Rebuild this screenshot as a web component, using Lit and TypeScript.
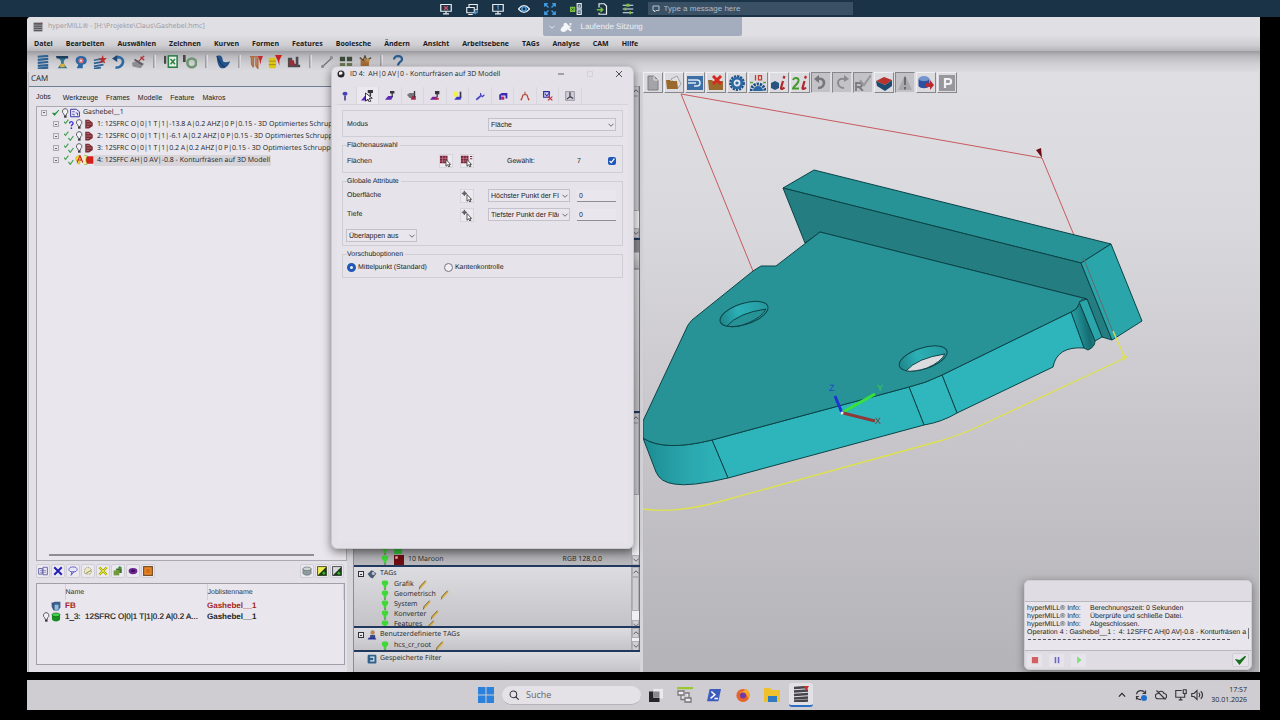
import { LitElement, html, svg, css } from "lit";
import { customElement } from "lit/decorators.js";
import { classMap } from "lit/directives/class-map.js";

/* All glyphs are drawn on a 16 x 16 grid. */
const glyphs: Record<string, unknown> = {
  screenX: svg`<path d="M1 2h14v9H1z M8 11v3 M4 14.5h8" fill="none" stroke="#e8edf2" stroke-width="1.6"/><path d="M5.5 4.2l5 5m0-5l-5 5" stroke="#e0566a" stroke-width="1.7"/>`,
  screens: svg`<path d="M4 6V2h11v7h-3 M1 6h10v7H1z M3 15.5h6" fill="none" stroke="#e8edf2" stroke-width="1.5"/><path d="M15 10v3h-4m2-2l-2 2 2 2" fill="none" stroke="#4ba3e8" stroke-width="1.4"/>`,
  screenOne: svg`<path d="M1 2h14v9H1z M8 11v3 M4 14.5h8" fill="none" stroke="#e8edf2" stroke-width="1.6"/><path d="M6.8 4.8L8.2 4v5" fill="none" stroke="#4ba3e8" stroke-width="1.5"/>`,
  eye: svg`<path d="M0.5 8Q8-1 15.5 8Q8 17 .5 8z" fill="none" stroke="#e8edf2" stroke-width="1.7"/><circle cx="8" cy="8" r="2.8" fill="#1b3347" stroke="#4ba3e8" stroke-width="1.9"/>`,
  expand: svg`<path d="M1 5V1h4M1 1l5 5M11 1h4v4M15 1l-5 5M1 11v4h4M1 15l5-5M15 11v4h-4M15 15l-5-5" fill="none" stroke="#3f9fe6" stroke-width="1.7"/>`,
  grid: svg`<rect x="0" y="5" width="7" height="7" fill="#7ac142"/><path d="M2 7l3 3m0-3l-3 3" stroke="#1b3347"/><path d="M9.5.8H15v6H9.5z M9.5 9.2H15v6H9.5z" fill="none" stroke="#e8edf2" stroke-width="1.5"/><path d="M12.2 2.5v3M11 12.2h3" stroke="#e8edf2" stroke-width="1.5"/>`,
  file: svg`<path d="M4 6V1h7l3 3v11H4v-2" fill="none" stroke="#e8edf2" stroke-width="1.6"/><path d="M1 9h8m-3-3l3.2 3L6 12" fill="none" stroke="#7ac142" stroke-width="1.7"/>`,
  sliders: svg`<path d="M1 3h14M1 8h14M1 13h14" stroke="#e8edf2" stroke-width="1.5"/><path d="M9 1v4M4.5 6v4M11 11v4M7 1v4" stroke="#7ac142" stroke-width="2.2"/>`,
  chat: svg`<path d="M2 2h12v9H8l-3 3v-3H2z" fill="none" stroke="#d5dde5" stroke-width="1.6"/>`,
  chevron: svg`<path d="M3 5.5l5 5 5-5" fill="none" stroke="currentColor" stroke-width="1.7"/>`,
  chevronUp: svg`<path d="M3 10.5l5-5 5 5" fill="none" stroke="currentColor" stroke-width="1.9"/>`,
  splash: svg`<path d="M1 13c-1-4 3-5 4-7-1-3 2-5 4-3s2 4 4 3l2 2-3 1 4 3-2 2-4-3c-2 4-6 5-9 2z" fill="#f5f6f9"/><circle cx="14" cy="4" r="1.5" fill="#f5f6f9"/>`,
  app: svg`<rect x="1" y="1" width="14" height="14" fill="#5b5a60"/><path d="M1 5h14M1 8.5h14M1 12h14" stroke="#a9a8ae" stroke-width="1.2"/><path d="M12 1h3v3z" fill="#c43a3a"/>`,
  bars: svg`<path d="M2 2l12-1M2 5.5l12-1M2 9l12-1M2 12.5l12-1M2 15.5l12-1" stroke="#2d6293" stroke-width="2.5"/>`,
  spool: svg`<path d="M2 1h12l-4 6v3l4 5H3l4-5V7z" fill="#2f7390"/><path d="M1 1h14v3H2z" fill="#1c3d5c"/><path d="M6 10h5v4H6z" fill="#d7b040"/>`,
  head: svg`<path d="M3 15l2-4C0 8 1 1 8 1s8 6 5 9l-3 1v4z" fill="#2a67a5"/><circle cx="8" cy="6.5" r="3" fill="#d96f72"/><circle cx="8" cy="6.5" r="1.3" fill="#dcdbe1"/>`,
  barsStar: svg`<path d="M1 6l11-2M1 9.5l11-2M1 13l11-2M1 15.5l8-1" stroke="#2d6293" stroke-width="1.9"/><path d="M11 0l1.3 3.4 3.7.2-3 2.4 1 3.8L11 7.6 7.8 9.4 9 6 6 3.7l3.7-.1z" fill="#b5302f"/>`,
  undoBlue: svg`<path d="M4 3c6-2 10 2 8 7-1 3-5 5-8 4" fill="none" stroke="#2c6aa3" stroke-width="3"/><path d="M6 0v8L0 4z" fill="#1d4878"/>`,
  cutter: svg`<path d="M1 9l6-3 8 4-4 5-9-2z" fill="#8d8c92"/><path d="M4 5l9 6" stroke="#55545a" stroke-width="2"/><path d="M9 7l6-6M11 2l4 4" stroke="#b33237" stroke-width="1.6"/>`,
  excel: svg`<path d="M1 1v9" stroke="#454a44" stroke-width="3"/><rect x="5" y="1" width="10" height="13" fill="#e8f2e9" stroke="#2b7f46" stroke-width="1.8"/><path d="M7.5 4.5l5 6m0-6l-5 6" stroke="#2b7f46" stroke-width="1.7"/>`,
  ring: svg`<path d="M1.5 0v8" stroke="#454a44" stroke-width="3"/><circle cx="10" cy="9" r="5" fill="none" stroke="#6e9672" stroke-width="3"/>`,
  boot: svg`<path d="M1 1c5-1 6 0 7 6 2 2 5 1 8 0-1 4-5 9-10 8C2 13 1 6 1 1z" fill="#235489"/><path d="M1 1c2 6 4 10 9 13" fill="none" stroke="#153b66" stroke-width="1.5"/>`,
  tools: svg`<path d="M1 2h9M3 2v8l2 4V2M8 3v9l2 3V3" fill="none" stroke="#b06e45" stroke-width="1.8"/><path d="M10 1h6l-2 5-1 5-1-5z" fill="#c42a2e"/>`,
  toolsY: svg`<rect x="1" y="3" width="8" height="12" rx="1" fill="#dfc514"/><path d="M1 7h8M1 11h8" stroke="#9f8b0f"/><path d="M8 0h8l-3 6v6l-2-6z" fill="#c8201f"/>`,
  machine: svg`<path d="M1 3h5v7h4V2h3v9h2v3H1z" fill="#4b4a50"/><path d="M2 6h6l1 6H3z" fill="#9e2c35"/>`,
  line: svg`<path d="M2 14L14 3" stroke="#6d6c72" stroke-width="1.5"/><circle cx="3" cy="13" r="1.8" fill="#8d8c92"/><circle cx="13" cy="3" r="1.8" fill="#8d8c92"/>`,
  blocks: svg`<path d="M1 2h6v5H1zM9 2h6v5H9z" fill="#3d4b3a"/><path d="M1 9h6v5H1zM9 9h6v5H9z" fill="#6d7d52"/>`,
  jar: svg`<path d="M3 5h10l-1 10H3z" fill="#a8713a"/><path d="M2 3l4 3 2-5 2 5 5-3" stroke="#5d4a33" stroke-width="1.5" fill="none"/><circle cx="11" cy="6" r="2" fill="#c48b42"/>`,
  help: svg`<path d="M3.5 5C3.5 0 13 0 12.5 5c0 3-4.5 3-4.5 7" fill="none" stroke="#2a5d92" stroke-width="2.6"/><circle cx="8" cy="14.5" r="1.5" fill="#2a5d92"/>`,
  check: svg`<path d="M1 8l4 5L14 2l-8 7z" fill="#1e8a35" stroke="#1e8a35" stroke-width="1.5"/>`,
  checks: svg`<path d="M0 4l2.5 3L7 1M7 11l3 4 5-7" fill="none" stroke="#3da14f" stroke-width="1.8"/>`,
  checkQ: svg`<path d="M0 4l2.5 3L7 1" fill="none" stroke="#3da14f" stroke-width="1.8"/><path d="M9 7c0-4 5.5-3.5 5.5 0 0 2-2.7 2-2.7 4.5" fill="none" stroke="#3a38d0" stroke-width="2.2"/><circle cx="11.8" cy="14.6" r="1.4" fill="#3a38d0"/>`,
  bulb: svg`<path d="M8 1a4.5 4.5 0 0 1 2.5 8.3L10 12H7L6 9.3A4.5 4.5 0 0 1 8 1z" fill="#f2f1f5" stroke="#55545a" stroke-width="1.5"/><path d="M6.5 12.5h4v3h-4z" fill="#3b3a40"/>`,
  bulbA: svg`<path d="M7 1a5 5 0 0 1 2.5 9L9 14H6L5 10A5 5 0 0 1 7 1z" fill="#f4e23a" stroke="#b59d17"/><path d="M5 12L9.5 1 14 12M7 8h5" fill="none" stroke="#d3251e" stroke-width="1.9"/>`,
  doc: svg`<path d="M1 2h9l5 4v8H1z" fill="#eceafa" stroke="#3a37a0" stroke-width="1.6"/><path d="M3.5 6h4M3.5 10h3v2M9 8h3v4" stroke="#3a37a0" stroke-width="1.3" fill="none"/>`,
  job: svg`<path d="M2 1h6l6 5v5l-6 4H2z" fill="#7c2d33"/><path d="M4 4h5M4 8h8M4 12h4" stroke="#c79a9e" stroke-width=".9"/>`,
  jobRed: svg`<rect x="3" y="2" width="12" height="12" fill="#d3201c"/><path d="M0 1h5c0 2-2 3-2 7s2 5 2 7H0" fill="#f6f2a8" stroke="#6fae36"/>`,
  listB: svg`<path d="M1 4h6v9H1zM8 2h7v12H8z" fill="#ecebf5" stroke="#6764a8" stroke-width="1.5"/><path d="M3 7h10M3 10h10" stroke="#6764a8"/>`,
  crossB: svg`<path d="M2 2l12 12M14 2L2 14" stroke="#231fb4" stroke-width="3.2"/>`,
  lasso: svg`<ellipse cx="8" cy="5.5" rx="6.5" ry="4" fill="#e7e6f7" stroke="#6a66c9" stroke-width="1.6"/><path d="M6 9l-1 6 5-7" fill="none" stroke="#6a66c9" stroke-width="1.6"/>`,
  sun: svg`<path d="M3 5l3-3 5 1 3 4-2 6H5l-3-2z" fill="#eeeac0" stroke="#7e7d60" stroke-dasharray="2 1"/><path d="M4 12l9-5" stroke="#8d8c5a" stroke-width="1.5"/>`,
  crossY: svg`<path d="M2 2l12 12M14 2L2 14" stroke="#a9aa00" stroke-width="3.6"/><path d="M2 2l12 12M14 2L2 14" stroke="#f3ee3a" stroke-width="1.4"/>`,
  cube: svg`<path d="M1 7h9v8H1z" fill="#6f9a3c"/><path d="M5 4h9v7h-4V7H5z" fill="#486f2a"/><path d="M11 0v6M8 3h6" stroke="#2f8e2c" stroke-width="2"/>`,
  torus: svg`<ellipse cx="8" cy="8" rx="7" ry="5" fill="#6b2390"/><ellipse cx="8" cy="7.5" rx="3" ry="1.6" fill="#2c0d40"/>`,
  orange: svg`<rect x="1" y="1" width="14" height="14" fill="#e98325" stroke="#6f4a28" stroke-width="1.8"/><path d="M5 5h6v6H5z" fill="#d06c13"/>`,
  drum: svg`<path d="M1.5 4v8c2 3.5 11 3.5 13 0V4" fill="#8f9c9e" stroke="#5a6668"/><ellipse cx="8" cy="4.5" rx="6.5" ry="3" fill="#cdd5d6" stroke="#5a6668"/>`,
  diagY: svg`<rect x="1" y="1" width="14" height="14" fill="#f1ee52" stroke="#3d3d20" stroke-width="1.4"/><path d="M15 1v14H1z" fill="#1c3b1a"/><path d="M11 9v5M8.5 11.5h5" stroke="#3bd23b" stroke-width="1.6"/>`,
  diagG: svg`<rect x="1" y="1" width="14" height="14" fill="#d9d9dd" stroke="#3d3d40" stroke-width="1.4"/><path d="M15 1v14H1z" fill="#1c3b1a"/><path d="M11 9v5M8.5 11.5h5" stroke="#3bd23b" stroke-width="1.6"/>`,
  cubeBlue: svg`<path d="M1 3l5-2h9v9l-3 5H4L1 9z" fill="#3f5f8e"/><path d="M5 6h7v8H5z" fill="#8fc0dd"/><path d="M1 3l4 3v8" fill="none" stroke="#26355c"/>`,
  cylGreen: svg`<path d="M1.5 4v8c2 4 11 4 13 0V4z" fill="#198c24"/><ellipse cx="8" cy="4.5" rx="6.5" ry="3" fill="#3fd44a" stroke="#0f5c17"/>`,
  bulbGreen: svg`<path d="M3 3c0-3 10-3 10 0 1 3-1 5-3 6v4H6V9C4 8 2 6 3 3z" fill="#3fd836"/><path d="M6.5 13h3v2.5h-3z" fill="#6b7d66"/>`,
  pencil: svg`<path d="M2 15l1.5-5L12 1l2 2L6 12z" fill="#d8b04a"/><path d="M2 15l1.5-5L12 1" fill="none" stroke="#6e5420" stroke-width="1.3"/>`,
  maroon: svg`<rect x="0" y="0" width="16" height="16" fill="#6e0d12"/><rect x="2" y="2" width="4" height="4" fill="#e9b3b5"/>`,
  swatch: svg`<rect x="0" y="0" width="16" height="16" fill="#35c23a"/>`,
  tags: svg`<path d="M1 8l6-6 3 1 5 4-6 8-4-2z" fill="#4a5a70"/><circle cx="10" cy="7" r="2.5" fill="#b7c3d2"/>`,
  user: svg`<circle cx="9" cy="4" r="3.5" fill="#b88955"/><path d="M5 8h8v5H5z" fill="#3f4b7a"/><path d="M1 15h14l-2-3H3z" fill="#2a36a0"/>`,
  filter: svg`<rect x="1" y="1" width="14" height="14" rx="2" fill="#30618a"/><path d="M5 5h6v6H5" fill="none" stroke="#dbe8f2" stroke-width="1.8"/>`,
  pin: svg`<path d="M8 7v8" stroke="#27266e" stroke-width="2.2"/><path d="M4 5c0-5 8-5 8 0l-2 2H6z" fill="#4541b5"/>`,
  mill: svg`<path d="M0 14l5-6h8l-3 6z" fill="#5d2ab8"/><path d="M9 0h5v3H9zM11.5 3v7" stroke="#37363c" stroke-width="2" fill="#37363c"/>`,
  millSel: svg`<path d="M0 14l5-6h8l-3 6z" fill="#5d2ab8"/><path d="M10 0h5v3h-5zM12.5 3v5" stroke="#37363c" stroke-width="2" fill="#37363c"/><path d="M6 4v11l3-3 2 4 2-1-2-4h4z" fill="#fff" stroke="#000"/>`,
  millR: svg`<path d="M0 6l4-3h7v8H4z" fill="#77757e"/><path d="M6 13l2-5h6v6H8z" fill="#a32a4d"/><path d="M12 0v10" stroke="#37363c" stroke-width="2.2"/>`,
  millM: svg`<path d="M0 14l4-5h8l-2 5z" fill="#7b2198"/><path d="M9 1h5v3H9zM11.5 4v6" stroke="#37363c" stroke-width="2" fill="#37363c"/><path d="M9 11h5v3H9z" fill="#c02b3b"/>`,
  millY: svg`<path d="M1 1h7v8H1z" fill="#f5f044"/><path d="M2 14l4-5h8l-2 5z" fill="#3a39c7"/><path d="M12 1v9" stroke="#37363c" stroke-width="2.6"/>`,
  wrench: svg`<path d="M2 14L9 8" stroke="#4c48c4" stroke-width="2.8"/><path d="M9 3v4l3 2 3-3" fill="none" stroke="#4c48c4" stroke-width="2"/>`,
  loop: svg`<path d="M2 6l4-3h9v9h-3V7H5v7H2z" fill="#3b2aaf"/><path d="M5 9h5v5H5z" fill="#b32a6a"/>`,
  compass: svg`<path d="M8 1v5M2 15l3-9h6l3 9M5 6c-2 3-1 6-4 8M11 6c2 3 1 6 4 8" fill="none" stroke="#b8402f" stroke-width="1.7"/>`,
  checkDoc: svg`<path d="M1 1h9v9H1z" fill="#d9d7f4" stroke="#2e2da0" stroke-width="1.8"/><path d="M3 4l3 4 5-6" fill="none" stroke="#2e2da0" stroke-width="1.7"/><path d="M8 9l7 6m0-6l-7 6" stroke="#c22b3a" stroke-width="2"/>`,
  axis: svg`<path d="M1 1h14v14H1z" fill="#cfced6" stroke="#77757e"/><path d="M8 2v7l5 3M8 9l-5 4" stroke="#3b3a4c" stroke-width="2" fill="none"/>`,
  pickOne: svg`<path d="M0 1h10v10H0z" fill="#7d2038"/><path d="M0 4.5h10M0 8h10M3.5 1v10M7 1v10" stroke="#d9a9b5" stroke-width=".6"/><path d="M8 6v9l2.2-2 1.5 3 1.5-.8-1.5-2.7H14z" fill="#fff" stroke="#222"/>`,
  pickMany: svg`<path d="M0 1h10v10H0z" fill="#7d2038"/><path d="M0 4.5h10M0 8h10M3.5 1v10M7 1v10" stroke="#d9a9b5" stroke-width=".6"/><path d="M12 2h3M12 5h3" stroke="#7d2038" stroke-width="1.5"/><path d="M8 6v9l2.2-2 1.5 3 1.5-.8-1.5-2.7H14z" fill="#fff" stroke="#222"/>`,
  pickPoint: svg`<path d="M1 4.5h7M4.5 1v7" stroke="#44434a"/><circle cx="4.5" cy="4.5" r="2" fill="none" stroke="#44434a"/><path d="M8 6v9l2.2-2 1.5 3 1.5-.8-1.5-2.7H14z" fill="#fff" stroke="#222"/>`,
  ball: svg`<circle cx="8" cy="8" r="7" fill="#26252a"/><path d="M4 5c3-4 8-1 7 2s-5 3-7 2z" fill="#f4f4f6"/>`,
  min: svg`<path d="M2 8h12" stroke="#333" stroke-width="1.5"/>`,
  max: svg`<path d="M3 3h10v10H3z" fill="none" stroke="#cfcdd4" stroke-width="1.4"/>`,
  close: svg`<path d="M2 2l12 12M14 2L2 14" stroke="#333" stroke-width="1.7"/>`,
  page: svg`<path d="M3 1h6l4 4v10H3z" fill="#a5a4a8" stroke="#7e7d82"/><path d="M9 1v4h4" fill="none" stroke="#e2e1e5"/>`,
  open: svg`<path d="M5 4l6-3 4 8-3 4z" fill="#e1e0e2" stroke="#8a898d" stroke-width=".7"/><path d="M0 5h4l1 1h6l1 8H1z" fill="#9a6a2c"/>`,
  scan: svg`<rect x="0" y="1" width="16" height="14" fill="#3a6ea5"/><path d="M1 5h9a3 3 0 1 1 0 6H7M1 8h8" fill="none" stroke="#dce8f3" stroke-width="1.5"/>`,
  openX: svg`<path d="M0 5h4l1 1h10v9H1z" fill="#9a6a2c"/><path d="M5 1l8 8m0-8L5 9" stroke="#d42a20" stroke-width="3"/>`,
  gear: svg`<circle cx="8" cy="8" r="6.8" fill="none" stroke="#1e4e82" stroke-width="2.2" stroke-dasharray="2.2 1"/><circle cx="8" cy="8" r="4.8" fill="#dfe5ec" stroke="#2a67a5" stroke-width="2.8"/><circle cx="8" cy="8" r="1.6" fill="#2a67a5"/>`,
  gearTen: svg`<path d="M1 16a7 7 0 0 1 14 0" fill="none" stroke="#1e4e82" stroke-width="3" stroke-dasharray="2.2 1"/><path d="M3 16a5 5 0 0 1 10 0z" fill="#2a67a5"/><path d="M0 7.5h3m10 0h3" stroke="#62a344" stroke-width="1.5"/><path d="M5.5 0v5.5M8.5.6h3v4.3h-3z" fill="none" stroke="#c43a2e" stroke-width="1.3"/>`,
  cubeInfo: svg`<path d="M0 8l4-2 4 2v5l-4 2-4-2z" fill="#27557f"/><path d="M13.5 1l-1 2.5M12 6l-2 7c0 1.5 2 1 3.5-.5" fill="none" stroke="#b0282b" stroke-width="2.2"/>`,
  twoInfo: svg`<path d="M1 5c1-3 6-2.5 5.5 1C6 9 1 12 1 13.5h6" fill="none" stroke="#44992c" stroke-width="2"/><path d="M14 1l-1 2.5M12.5 6l-2 7c0 1.5 2 1 3.5-.5" fill="none" stroke="#b0282b" stroke-width="2.2"/>`,
  undo: svg`<path d="M5 4c8-2 8 9 0 9" fill="none" stroke="#77767a" stroke-width="2.6"/><path d="M6 0v8L1 4z" fill="#77767a"/>`,
  redo: svg`<path d="M10 4c-8-2-8 9 0 9" fill="none" stroke="#8b8a8e" stroke-width="2"/><path d="M10 0v7l5-3z" fill="#8b8a8e"/>`,
  rcheck: svg`<path d="M1 16V8h3c4 0 4 4 0 4H1m3 0l4 4" fill="none" stroke="#7c7b7f" stroke-width="1.8"/><path d="M5 5l4 5 7-10" fill="none" stroke="#99989c" stroke-width="2"/>`,
  block: svg`<path d="M0 6l8-4 8 3-7 5z" fill="#b8332c"/><path d="M0 6l9 4v6L1 11zM16 5l-7 5v6l7-5z" fill="#1f4a70"/>`,
  warn: svg`<path d="M8 0l7 15H1z" fill="#a9a8ac"/><path d="M8 2v8M8 12v2.5" stroke="#6c6b70" stroke-width="2"/>`,
  export: svg`<ellipse cx="6" cy="4" rx="5.5" ry="3" fill="#7395cc"/><path d="M.5 4v7c2 3 9 3 11 0V4c-2 3-9 3-11 0z" fill="#2d4fa0"/><path d="M8 8h4V5l4 5-4 5v-3H8z" fill="#b72c33"/>`,
  park: svg`<path d="M0 0h16v16H0z" fill="#98979b"/><path d="M6 13V4h3.5c3.5 0 3.5 5 0 5H6" fill="none" stroke="#f2f2f4" stroke-width="2.2"/>`,
  stop: svg`<path d="M3 3h10v10H3z" fill="#d1605f"/>`,
  pause: svg`<path d="M5.5 3v10M10.5 3v10" stroke="#6c68c2" stroke-width="2.5"/>`,
  play: svg`<path d="M5 2l7 6-7 6z" fill="#7de07a"/>`,
  checkBig: svg`<path d="M2 8l4 5L14 3 6.5 9z" fill="#17701f" stroke="#17701f" stroke-width="2"/>`,
  windows: svg`<path d="M0 0h7.5v7.5H0zM8.5 0H16v7.5H8.5zM0 8.5h7.5V16H0zM8.5 8.5H16V16H8.5z" fill="#2a82dc"/>`,
  search: svg`<circle cx="7" cy="7" r="5.3" fill="none" stroke="#37363c" stroke-width="1.7"/><path d="M11 11l4.5 4.5" stroke="#37363c" stroke-width="1.9"/>`,
  task: svg`<path d="M5 1h11v11H5z" fill="#eceaee"/><path d="M0 4h5v7h7v5H0z" fill="#262529"/><path d="M5 4h7v7H5z" fill="#8a898e"/>`,
  flow: svg`<path d="M0 1h16" stroke="#9bc832" stroke-width="2.4"/><path d="M1 4h6v4H1zM8 11h6v4H8zM4 8v4.5h4M8 6h4v5" fill="#efeef2" stroke="#77767b" stroke-width="1.3"/>`,
  shell: svg`<path d="M3 1h13l-3 14H0z" fill="#3c5cc0"/><path d="M5 4l4 3.8-5 4M8.5 12h4" fill="none" stroke="#fff" stroke-width="1.7"/>`,
  fox: svg`<circle cx="8" cy="8.5" r="7.5" fill="#e8622c"/><path d="M2 3l4 2 6-4c4 3 5 8 2 11-1-5-4-7-8-6z" fill="#f6a92c"/><circle cx="8" cy="8.5" r="3.4" fill="#6e3ba6"/>`,
  folder: svg`<path d="M0 1h6l2 2h8v12H0z" fill="#eec12d"/><path d="M4 9h9v6H4z" fill="#2f7ac4"/>`,
  stack: svg`<path d="M1 2l14-1M1 5.5l14-1M1 9l14-1M1 12.5l14-1M1 15.5l14-1" stroke="#46454b" stroke-width="2.5"/><path d="M11 0h5l-3 5z" fill="#c9332c"/>`,
  sync: svg`<path d="M2 7a6 6 0 0 1 11-2M14 2v4h-4M8 14a6 6 0 0 1-6-3M2 14v-4h3" fill="none" stroke="#37363c" stroke-width="1.6"/><circle cx="12" cy="12" r="4" fill="#1f6fd0"/>`,
  cloud: svg`<path d="M4 13a3.5 3.5 0 0 1 0-7c1-4 7-4 8 0a3.5 3.5 0 0 1 0 7zM2 2l12 12" fill="none" stroke="#37363c" stroke-width="1.5"/>`,
  net: svg`<path d="M9 2H1v9h12V8M5 14.5h5M7.5 11v3M11 1h4v5h-4zM13 6v3" fill="none" stroke="#37363c" stroke-width="1.5"/>`,
  sound: svg`<path d="M1 6v4h3l4 4V2L4 6zM10.5 5c1.5 2 1.5 4 0 6M13 3c3 3 3 7 0 10" fill="none" stroke="#37363c" stroke-width="1.5"/>`,
};

const icon = (name: string, cls = "") =>
  html`<svg class="ic ${cls}" viewBox="0 0 16 16" aria-hidden="true">${glyphs[name]}</svg>`;

const shared = css`
  :host { display: block; box-sizing: border-box; }
  *, *::before, *::after { box-sizing: border-box; }
  button, input, select { font: inherit; color: inherit; margin: 0; border-radius: 0; }
  button { border: 0; background: none; padding: 0; display: inline-flex; align-items: center; justify-content: center; }
  .ic { width: 12px; height: 12px; flex: none; display: block; }
  .s8 { width: 8px; height: 8px; }
  .s10 { width: 10px; height: 10px; }
  .s14 { width: 14px; height: 14px; }
  .s16 { width: 16px; height: 16px; }
`;

@customElement("remote-bar")
class RemoteBar extends LitElement {
  static styles = [shared, css`
    :host { height: 17px; background: #1b3347; font: 8px "Liberation Sans", Arial, sans-serif; }
    .bar { height: 100%; display: flex; align-items: center; justify-content: center; gap: 14px; padding-left: 12px; }
    .msg { display: flex; align-items: center; gap: 4px; width: 205px; height: 13px; padding: 0 4px; background: #3a5165; color: #b8c4cf; }
    input { flex: 1; min-width: 0; border: 0; padding: 0; background: none; outline: 0; }
    input::placeholder { color: #aebbc7; opacity: 1; }
  `];
  render() {
    return html`<div class="bar">
      ${[["screenX", "Trennen"], ["screens", "Wechseln"], ["screenOne", "Monitor"], ["eye", "Ansicht"], ["expand", "Vollbild"], ["grid", "Aktionen"], ["file", "Dateien"], ["sliders", "Optionen"]].map(
        ([g, l]) => html`<button aria-label=${l}>${icon(g)}</button>`)}
      <label class="msg">${icon("chat", "s8")}<input type="text" aria-label="Message" placeholder="Type a message here" /></label>
    </div>`;
  }
}

@customElement("job-panel")
class JobPanel extends LitElement {
  static styles = [shared, css`
    :host { display: flex; flex-direction: column; min-height: 0; font: 7px/12px "Open Sans", "Noto Sans", sans-serif; color: #222; background: #e3e1e7; }
    .head { height: 15px; padding: 0 2px; font-size: 8px; line-height: 14px; background: #dad9de; border-bottom: 1px solid #6c7f94; }
    .tabs { display: flex; align-items: flex-start; gap: 8px; height: 19px; padding: 5px 7px 0; font: 7px/11px "Liberation Sans", Arial, sans-serif; }
    .tabs .on { padding-right: 4px; line-height: 10px; }
    .tree { flex: 1; margin: 0 0 0 7px; border: 1px solid #a9a9b2; background: #e9e7ed; display: flex; flex-direction: column; justify-content: space-between; padding-bottom: 4px; min-height: 0; overflow: hidden; }
    ul { list-style: none; margin: 0; padding: 0 0 0 4px; }
    ul ul { padding-left: 12px; }
    .row { display: flex; align-items: center; white-space: nowrap; height: 12px; }
    .row.root { height: 11px; }
    .row .txt { padding: 0 1px 0 3px; line-height: 11px; }
    .row.sel .txt { background: #d7d5da; }
    .box { width: 6px; height: 6px; border: 1px solid #a9a8b0; background: linear-gradient(#66656d, #66656d) center / 2px 1px no-repeat; margin-right: 5px; flex: none; }
    .hbar { height: 2px; margin: 0 32px 0 12px; background: #8f8e94; }
    .tools { display: flex; gap: 1px; padding: 3px 3px 3px 7px; }
    .tools button { width: 14px; height: 14px; background: #ebe9ef; border: 1px solid #d0ced5; border-radius: 2px; }
    .tools .push { margin-left: auto; }
    .list { height: 82px; margin: 2px 2px 7px 7px; border: 1px solid #9fa0aa; background: #e9e7ed; }
    table { width: 100%; border-collapse: collapse; table-layout: fixed; font: 8px/11px "Liberation Sans", Arial, sans-serif; }
    .c1 { width: 28px; } .c2 { width: 142px; }
    th { font-size: 7px; font-weight: 400; text-align: left; height: 16px; border-right: 1px solid #d3d1d8; color: #333; }
    td, th { padding: 0; white-space: nowrap; }
    td { height: 11px; overflow: hidden; text-overflow: ellipsis; font-weight: 700; }
    td.soft { font-weight: 400; -webkit-text-stroke: 0.2px #111; }
    .red td { color: #a32424; }
    .pair { display: flex; justify-content: flex-end; padding-right: 4px; }
  `];
  render() {
    const jobs: [string, string, string, string][] = [
      ["checkQ", "bulb", "job", "1: 12SFRC O|0|1 T|1|-13.8 A|0.2 AHZ|0 P|0.15 - 3D Optimiertes Schruppen"],
      ["checks", "bulb", "job", "2: 12SFRC O|0|1 T|1|-6.1 A|0.2 AHZ|0 P|0.15 - 3D Optimiertes Schruppen"],
      ["checks", "bulb", "job", "3: 12SFRC O|0|1 T|1|0.2 A|0.2 AHZ|0 P|0.15 - 3D Optimiertes Schruppen"],
      ["checks", "bulbA", "jobRed", "4: 12SFFC AH|0 AV|-0.8 - Konturfräsen auf 3D Modell"],
    ];
    return html`
      <div class="head">CAM</div>
      <div class="tabs">${["Jobs", "Werkzeuge", "Frames", "Modelle", "Feature", "Makros"].map(
        (t, i) => html`<button class=${classMap({ on: i === 0 })}>${t}</button>`)}</div>
      <div class="tree">
        <ul><li>
          <div class="row root"><span class="box"></span>${icon("check", "s8")}${icon("bulb", "s10")}${icon("doc", "s10")}<span class="txt">Gashebel__1</span></div>
          <ul>${jobs.map((j, i) => html`<li class=${classMap({ row: true, sel: i === 3 })}>
            <span class="box"></span>${icon(j[0], "s10")}${icon(j[1], "s10")}${icon(j[2], "s10")}<span class="txt">${j[3]}</span></li>`)}</ul>
        </li></ul>
        <div class="hbar"></div>
      </div>
      <div class="tools">
        ${["listB", "crossB", "lasso", "sun", "crossY", "cube", "torus", "orange"].map((g) => html`<button aria-label=${g}>${icon(g, "s10")}</button>`)}
        ${["drum", "diagY", "diagG"].map((g, i) => html`<button class=${classMap({ push: i === 0 })} aria-label=${g}>${icon(g, "s10")}</button>`)}
      </div>
      <div class="list"><table>
        <colgroup><col class="c1" /><col class="c2" /><col /></colgroup>
        <thead><tr><th></th><th>Name</th><th>Joblistenname</th></tr></thead>
        <tbody>
          <tr class="red"><td><span class="pair">${icon("cubeBlue", "s10")}</span></td><td>FB</td><td>Gashebel__1</td></tr>
          <tr><td><span class="pair">${icon("bulb", "s10")}${icon("cylGreen", "s10")}</span></td><td class="soft">1_3:&nbsp; 12SFRC O|0|1 T|1|0.2 A|0.2 A...</td><td>Gashebel__1</td></tr>
        </tbody>
      </table></div>`;
  }
}

@customElement("tag-panel")
class TagPanel extends LitElement {
  static styles = [shared, css`
    :host { display: flex; flex-direction: column; min-height: 0; font: 7px/10px "Open Sans", "Noto Sans", sans-serif; color: #222; background: #c5c4c9; }
    section { display: grid; grid-template-columns: minmax(0, 1fr) 9px; border-bottom: 2px solid #20395c; overflow: hidden; background: linear-gradient(#dddce1, #c4c3c8); }
    .props { height: 168px; padding-top: 14px; background: #d8d7dc; }
    .views { height: 173px; }
    .views .bar { background: linear-gradient(#8b8a8f 12px, #dcdbe0 13px, #b9b8bd 28px, #77767b 29px, #dad9de 30px, #c3c2c7); }
    .colors { flex: 1; min-height: 0; align-items: stretch; background: linear-gradient(#d3d2d7, #d3d2d7 85%, #a5a4a8 89%, #b9b8bc); }
    .colors .body { align-self: end; }
    .tags { height: 61px; } .own { height: 24px; } .saved { height: 20px; border: 0; }
    .body { padding: 1px 0 0 4px; min-width: 0; }
    .row { display: flex; align-items: center; gap: 4px; height: 10px; white-space: nowrap; }
    .row.top { gap: 3px; height: 12px; }
    .kid { padding-left: 22px; }
    .rgb { margin-left: auto; padding-right: 29px; }
    .minus { width: 6px; height: 6px; border: 1px solid #333; background: linear-gradient(#333, #333) center / 2px 1px no-repeat #e8e7ec; }
    .saved .top { padding-left: 9px; }
    .bar { display: flex; flex-direction: column; justify-content: space-between; background: #f0eff3; border-left: 1px solid #a9a8ad; border-right: 1px solid #77767b; color: #55545a; }
    .bar span { height: 10px; display: flex; align-items: center; justify-content: center; background: #cfced3; border: 1px solid #b0afb5; }
    .bar .thumb { flex: 1; margin-bottom: 9px; }
    .props .thumb { margin-bottom: 17px; }
    .colors .thumb { margin-bottom: 60px; }
  `];
  bar(thumb = false) {
    return html`<div class="bar"><span>${icon("chevronUp", "s8")}</span>${thumb ? html`<span class="thumb"></span>` : null}<span>${icon("chevron", "s8")}</span></div>`;
  }
  render() {
    return html`
      <section class="props"><div class="body"></div>${this.bar(true)}</section>
      <section class="views"><div class="body"></div><div class="bar"></div></section>
      <section class="colors"><div class="body">
        <div class="row kid">${icon("bulbGreen", "s10")}${icon("swatch", "s8")}</div>
        <div class="row kid">${icon("bulbGreen", "s10")}${icon("maroon", "s10")}<span>10 Maroon</span><span class="rgb">RGB 128,0,0</span></div>
      </div>${this.bar(true)}</section>
      <section class="tags"><div class="body">
        <div class="row top"><span class="minus"></span>${icon("tags", "s10")}TAGs</div>
        ${["Grafik", "Geometrisch", "System", "Konverter", "Features"].map((t) => html`<div class="row kid">${icon("bulbGreen", "s10")}<span>${t}</span>${icon("pencil", "s10")}</div>`)}
      </div>${this.bar(true)}</section>
      <section class="own"><div class="body">
        <div class="row top"><span class="minus"></span>${icon("user", "s10")}Benutzerdefinierte TAGs</div>
        <div class="row kid">${icon("bulbGreen", "s10")}<span>hcs_cr_root</span>${icon("pencil", "s10")}</div>
      </div>${this.bar()}</section>
      <section class="saved"><div class="body"><div class="row top">${icon("filter", "s10")}Gespeicherte Filter</div></div></section>`;
  }
}

@customElement("model-view")
class ModelView extends LitElement {
  static styles = [shared, css`
    :host { display: grid; min-height: 0; min-width: 0; overflow: hidden; background: linear-gradient(#dfdee2, #d9d8dd 25%, #c9c7cc 58%, #b4b3b7); }
    .bar, .scene { grid-area: 1 / 1; }
    .scene { width: 100%; height: 100%; display: block; min-height: 0; }
    .bar { display: flex; gap: 1px; z-index: 1; align-self: start; }
    .bar button { width: 20px; height: 21px; background: #dcdbe0; border: 1px solid; border-color: #f0eff3 #87868b #87868b #f0eff3; }
    .bar .off { background: #c3c2c6; border-color: #87868b #dcdbe0 #dcdbe0 #87868b; }
    .axis { font: 9px "Liberation Sans", Arial, sans-serif; }
  `];
  render() {
    const tools = ["page", "open", "scan", "openX", "gear", "gearTen", "cubeInfo", "twoInfo", "undo", "redo", "rcheck", "block", "warn", "export", "park"];
    const off = ["undo", "redo", "rcheck", "warn"];
    return html`
      <svg class="scene" viewBox="643 72 616 600" preserveAspectRatio="xMinYMin meet" role="img" aria-label="3D Modell Gashebel">
        <defs>
          <linearGradient id="round"><stop offset="0" stop-color="#1c8c91" /><stop offset=".55" stop-color="#2aa8ae" /><stop offset="1" stop-color="#2eb5bb" /></linearGradient>
          <linearGradient id="hole"><stop offset="0" stop-color="#1e8489" /><stop offset=".4" stop-color="#2cb0b6" /><stop offset="1" stop-color="#25999e" /></linearGradient>
          <linearGradient id="groove" x1="0" y1=".3" x2="1" y2="0"><stop offset="0" stop-color="#2aa5aa" /><stop offset=".6" stop-color="#156b70" /><stop offset="1" stop-color="#29a2a7" /></linearGradient>
        </defs>
        <path d="M753 271L681 94L1042 158L1083 257" fill="none" stroke="#c65a60" />
        <path d="M1036 150L1041 148L1042 158z" fill="#6d0c14" />
        <g stroke="#0b4448" stroke-width="1" stroke-linejoin="round">
          <path d="M783 188L814 170L1111 244L1081 263z" fill="#289396" />
          <path d="M783 188L1081 263L1112 340L1102 337L1087 299L820 232L805 243z" fill="#247e81" />
          <path d="M1081 263L1111 244L1142 321L1112 340z" fill="#2aa6aa" />
          <path d="M1079 302L1087 299L1102 337L1095 341z" fill="#2aa6aa" />
          <path d="M1071 312Q1079 309 1079 302L1095 341Q1095 347 1088 350L1084 348z" fill="url(#groove)" />
          <path d="M942 375L1071 312L1084 348Q1057 346 1053 367L957 413z" fill="#2eb5bb" />
          <path d="M909 387Q926 383 942 375L957 413Q942 422 924 425z" fill="#2fb7bd" />
          <path d="M712 440L909 387L924 425L728 478z" fill="#2eb5bb" />
          <path d="M643 438Q664 452 712 440L728 478Q690 487 674 484Q660 482 656 472z" fill="url(#round)" />
          <path d="M643 421L688 325Q691 320 697 316L753 271L761 266H776L820 232L1087 299Q1079 299 1079 304Q1077 310 1071 312L942 375Q926 383 909 387L712 440Q664 452 643 438z" fill="#289396" />
        </g>
        <g stroke="#0b4448" stroke-width="1">
          <ellipse cx="744" cy="314" rx="25" ry="10.5" transform="rotate(-18 744 314)" fill="url(#hole)" />
          <path d="M727 326Q738 313 766 309Q762 317 748 323Q736 328 727 326z" fill="#289396" />
          <ellipse cx="923" cy="358.5" rx="25" ry="10.5" transform="rotate(-18 923 358)" fill="url(#hole)" />
          <path d="M906 371Q917 358 945 354Q941 362 927 368Q915 372 906 371z" fill="#dcdbe0" />
        </g>
        <path d="M1083 257L1113 332" stroke="#67696c" fill="none" />
        <g fill="none" stroke="#dde14f" stroke-width="1.3">
          <path d="M643 509Q676 514 722 501L936 442Q962 435 986 423L1125 358L1113 331" />
          <path d="M1121 357h7M1125 354v6" />
        </g>
        <g class="axis" stroke-width="3" fill="none">
          <path d="M842 413L835 396" stroke="#1b35d6" /><path d="M843 412L875 394" stroke="#37e23a" /><path d="M843 413L875 421" stroke="#8f3a3a" />
          <circle cx="842" cy="413" r="1.5" fill="#f1f1f1" />
          <g stroke="none"><text x="829" y="391" fill="#1f43c9">Z</text><text x="877" y="391" fill="#37d23a">Y</text><text x="875" y="424" fill="#6e3a3e">X</text></g>
        </g>
      </svg>
      <div class="bar">${tools.map((t) => html`<button class=${classMap({ off: off.includes(t) })} aria-label=${t}>${icon(t, "s16")}</button>`)}</div>`;
  }
}

@customElement("job-dialog")
class JobDialog extends LitElement {
  static styles = [shared, css`
    :host { display: flex; flex-direction: column; background: #e4e2e8; border: 1px solid #c9c8ce; border-radius: 6px; box-shadow: 0 3px 10px rgba(0, 0, 0, 0.5); font: 7px/9px "Liberation Sans", Arial, sans-serif; color: #222; }
    .title { display: flex; align-items: center; gap: 5px; height: 14px; padding: 0 10px 0 5px; font: 7px/13px "Open Sans", sans-serif; }
    .title h1 { font: inherit; margin: 0; flex: 1; white-space: pre; }
    .ctl { display: flex; gap: 21px; align-items: center; }
    .tabs { display: flex; height: 23px; padding: 6px 51px 0 2px; }
    .tabs button { flex: 1; height: 17px; border-right: 1px solid #d9d7de; }
    .tabs .on { background: #ebe9ef; }
    form { flex: 1; margin: 0 5px 5px; border-top: 1px solid #d5d3da; padding: 5px; display: flex; flex-direction: column; gap: 4px; background: #e6e4ea; }
    fieldset { border: 1px solid #d0ced5; margin: 0; padding: 0 6px 0 4px; min-width: 0; }
    legend { padding: 0 2px 0 0; line-height: 9px; }
    .first { padding: 6px 6px 5px 4px; }
    .row { display: grid; grid-template-columns: minmax(0, 1fr) auto 82px 39px; column-gap: 7px; align-items: center; height: 19px; }
    .row.tall { height: 22px; }
    .row.wide { grid-template-columns: minmax(0, 1fr) 128px; height: 14px; }
    .btns { display: flex; gap: 7px; padding-right: 7px; }
    .btns button { width: 14px; height: 14px; background: #eceaf0; border: 1px solid #d8d6dd; }
    .pick { position: relative; display: block; }
    .pick select { appearance: none; width: 100%; height: 13px; padding: 0 10px 0 2px; border: 1px solid #c3c1c9; background: #e9e7ed; display: block; line-height: 11px; }
    .pick .ic { position: absolute; right: 1px; top: 3px; color: #55545c; pointer-events: none; }
    .num { width: 100%; height: 12px; border: 0; border-bottom: 1px solid #8f8e96; background: #e9e7ed; padding: 0 2px; }
    .lap { width: 71px; margin: 5px 0 3px -1px; }
    .cnt { display: flex; justify-content: space-between; align-items: center; }
    .gew { padding-left: 19px; }
    input[type="checkbox"] { width: 8px; height: 8px; accent-color: #1f58b8; }
    .radios { display: flex; gap: 17px; padding: 4px 0 5px; }
    .radios label { display: flex; align-items: center; gap: 2px; }
    input[type="radio"] { appearance: none; width: 9px; height: 9px; border-radius: 50%; border: 1px solid #77767e; background: #f1eff4; }
    input[type="radio"]:checked { border: 3px solid #1f58b8; }
  `];
  pick(label: string, value: string, cls = "") {
    return html`<span class="pick ${cls}"><select aria-label=${label}><option>${value}</option></select>${icon("chevron", "s8")}</span>`;
  }
  level(label: string, value: string) {
    const id = label === "Tiefe" ? "depth" : "surface";
    return html`<div class="row"><label for=${id}>${label}</label>
      <span class="btns"><button type="button" aria-label="Punkt wählen">${icon("pickPoint")}</button></span>
      ${this.pick(label, value)}<input class="num" id=${id} type="text" value="0" /></div>`;
  }
  render() {
    return html`
      <div class="title">${icon("ball", "s8")}<h1>ID 4:  AH|0 AV|0 - Konturfräsen auf 3D Modell</h1>
        <div class="ctl"><button aria-label="Minimieren">${icon("min", "s8")}</button><button aria-label="Maximieren">${icon("max", "s8")}</button><button aria-label="Schließen">${icon("close", "s8")}</button></div></div>
      <div class="tabs">${["pin", "millSel", "mill", "millR", "millM", "millY", "wrench", "loop", "compass", "checkDoc", "axis"].map(
        (g, i) => html`<button class=${classMap({ on: i === 1 })} aria-label=${g}>${icon(g, i === 1 ? "" : "s10")}</button>`)}</div>
      <form>
        <fieldset class="first"><div class="row wide"><span>Modus</span>${this.pick("Modus", "Fläche")}</div></fieldset>
        <fieldset><legend>Flächenauswahl</legend>
          <div class="row tall"><span>Flächen</span>
            <span class="btns"><button type="button" aria-label="Fläche wählen">${icon("pickOne")}</button><button type="button" aria-label="Flächen ändern">${icon("pickMany")}</button></span>
            <span class="gew">Gewählt:</span><span class="cnt"><span>7</span><input type="checkbox" checked aria-label="Flächen gewählt" /></span></div>
        </fieldset>
        <fieldset><legend>Globale Attribute</legend>
          ${this.level("Oberfläche", "Höchster Punkt der Fläche")}${this.level("Tiefe", "Tiefster Punkt der Fläche")}
          ${this.pick("Überlappen", "Überlappen aus", "lap")}
        </fieldset>
        <fieldset><legend>Vorschuboptionen</legend>
          <div class="radios"><label><input type="radio" name="feed" checked />Mittelpunkt (Standard)</label><label><input type="radio" name="feed" />Kantenkontrolle</label></div>
        </fieldset>
      </form>`;
  }
}

@customElement("log-window")
class LogWindow extends LitElement {
  static styles = [shared, css`
    :host { display: flex; flex-direction: column; background: #dfdde3; border: 1px solid #cfced4; border-radius: 5px; box-shadow: 0 2px 8px rgba(0, 0, 0, 0.4); font: 7px/8px "Liberation Sans", Arial, sans-serif; color: #222; overflow: hidden; }
    .head { height: 21px; border-bottom: 1px solid #b9b8bf; }
    .log { flex: 1; display: grid; grid-template-columns: minmax(0, 1fr) 3px; padding: 3px 0 0 2px; background: #e8e6ec; border-bottom: 1px solid #b9b8bf; }
    .text { white-space: pre; }
    .line { display: grid; grid-template-columns: 63px 1fr; }
    .dash { border-top: 1px dashed #55545c; margin: 2px 18px 0 1px; }
    .sb { width: 1px; height: 11px; background: #77767e; margin-top: 23px; }
    .foot { display: flex; align-items: center; gap: 7px; height: 18px; padding: 0 2px; }
    .foot button { width: 15px; height: 13px; background: #e6e4ea; }
    .foot .ok { margin-left: auto; width: 17px; height: 14px; border: 1px solid #cfced4; border-radius: 2px; }
  `];
  render() {
    return html`<div class="head"></div>
      <div class="log"><div class="text">${["Berechnungszeit: 0 Sekunden", "Überprüfe und schließe Datei.", "Abgeschlossen."].map(
        (t) => html`<div class="line"><span>hyperMILL® Info:</span><span>${t}</span></div>`)}<div>Operation 4 : Gashebel__1 :  4: 12SFFC AH|0 AV|-0.8 - Konturfräsen a</div><div class="dash"></div></div><div class="sb"></div></div>
      <div class="foot"><button aria-label="Stopp">${icon("stop", "s10")}</button><button aria-label="Pause">${icon("pause", "s10")}</button><button aria-label="Start">${icon("play", "s10")}</button><button class="ok" aria-label="OK">${icon("checkBig")}</button></div>`;
  }
}

@customElement("task-bar")
class TaskBar extends LitElement {
  static styles = [shared, css`
    :host { height: 30px; background: #cfcdd1; font: 7px/10px "Open Sans", sans-serif; color: #26252a; }
    .bar { height: 100%; display: grid; grid-template-columns: 1fr auto 1fr; align-items: center; }
    .mid { grid-column: 2; display: flex; align-items: center; gap: 5px; padding-left: 4px; }
    .search { display: flex; align-items: center; gap: 7px; width: 139px; height: 19px; margin: 0 -2px 0 3px; padding: 0 7px; border-radius: 10px; background: #e4e2e7; border-bottom: 1px solid #b5b3b9; }
    .search input { flex: 1; min-width: 0; border: 0; padding: 0; background: none; font-size: 9px; }
    .search input::placeholder { color: #66656b; opacity: 1; }
    .mid .tile { width: 24px; height: 24px; border-radius: 3px; }
    .tile.on { background: #e3e1e6; border-bottom: 2px solid #2a6fc4; }
    .tray { display: flex; justify-content: flex-end; align-items: center; gap: 8px; padding-right: 13px; }
    .near { margin-left: -4px; }
    .when { text-align: right; padding-top: 1px; }
  `];
  render() {
    return html`<div class="bar">
      <div class="mid"><button aria-label="Start">${icon("windows", "s16")}</button>
        <label class="search">${icon("search", "s10")}<input type="search" placeholder="Suche" aria-label="Suche" /></label>
        ${["task", "flow", "shell", "fox", "folder", "stack"].map((g) => html`<button class=${classMap({ tile: true, on: g === "stack" })} aria-label=${g}>${icon(g, g === "folder" || g === "stack" || g === "flow" ? "s16" : "s14")}</button>`)}
      </div>
      <div class="tray">${icon("chevronUp", "s10")}${icon("sync")}${icon("cloud")}${icon("net")}${icon("sound", "near")}<time class="when">17:57<br />30.01.2026</time></div>
    </div>`;
  }
}

@customElement("app-root")
class AppRoot extends LitElement {
  static styles = [shared, css`
    :host { display: flex; flex-direction: column; height: 100vh; min-height: 600px; overflow: hidden; background: #000; padding-bottom: 10px; text-rendering: geometricPrecision; font: 7px/10px "Open Sans", "Noto Sans", sans-serif; color: #1d1c20; }
    remote-bar, task-bar { flex: none; }
    task-bar { margin: 0 20px 0 27px; }
    .desk { flex: 1; min-height: 0; position: relative; margin: 0 20px 8px 27px; display: flex; flex-direction: column; background: #d2d1d6; border-radius: 4px 4px 0 0; }
    .title { height: 19px; display: flex; align-items: center; gap: 5px; padding: 0 6px; background: #e0dfe4; border-radius: 4px 0 0 0; color: #98979d; }
    .session { position: absolute; top: 0; left: 50%; width: 199px; height: 19px; margin-left: -101px; background: #a4adbe; color: #eef0f5; display: flex; align-items: center; gap: 4px; padding: 0 5px; border-radius: 0 0 2px 2px; font: 8px "Liberation Sans", Arial, sans-serif; }
    .session span { margin-left: 5px; }
    .menu { height: 15px; display: flex; gap: 13px; padding: 0 7px; background: linear-gradient(#dddce1, #cfced3 60%, #b5b4b8); font-weight: 700; color: #1a191d; }
    .tools { height: 21px; display: flex; align-items: center; gap: 6px; padding: 0 9px; background: linear-gradient(#9b9a9e, #bab9bd 25%, #cfced3 60%, #dcdbe0); }
    .tools .ic { width: 14px; height: 14px; margin-right: -1px; }
    .sep { width: 8px; height: 13px; background: linear-gradient(90deg, #8f8e93, #eceaf0) center / 3px 100% no-repeat; }
    .work { flex: 1; min-height: 0; display: grid; grid-template-columns: 319px 290px minmax(0, 1fr); column-gap: 3px; padding: 0 1px; background: #d6d5da; }
    job-panel { border-left: 1px solid #b9b8c0; }
    tag-panel { margin-left: 3px; border-left: 1px solid #8d8c92; }
    .dialog { position: absolute; left: 304px; top: 49px; width: 303px; height: 483px; }
    .log { position: absolute; right: 8px; bottom: 2px; width: 228px; height: 90px; }
  `];
  render() {
    const menu = ["Datei", "Bearbeiten", "Auswählen", "Zeichnen", "Kurven", "Formen", "Features", "Boolesche", "Ändern", "Ansicht", "Arbeitsebene", "TAGs", "Analyse", "CAM", "Hilfe"];
    const tools = ["bars", "spool", "head", "barsStar", "undoBlue", "cutter", "|", "excel", "ring", "|", "boot", "|", "tools", "toolsY", "machine", "|", "line", "blocks", "jar", "|", "help"];
    return html`
      <remote-bar></remote-bar>
      <main class="desk">
        <div class="title">${icon("app", "s10")}hyperMILL® - [H:\\Projekte\\Claus\\Gashebel.hmc]</div>
        <nav class="menu">${menu.map((m) => html`<button>${m}</button>`)}</nav>
        <div class="tools">${tools.map((t) => t === "|" ? html`<span class="sep"></span>` : html`<button aria-label=${t}>${icon(t)}</button>`)}</div>
        <div class="work"><job-panel></job-panel><tag-panel></tag-panel><model-view></model-view></div>
        <div class="session">${icon("chevron", "s8")}${icon("splash")}<span>Laufende Sitzung</span></div>
        <job-dialog class="dialog"></job-dialog>
        <log-window class="log"></log-window>
      </main>
      <task-bar></task-bar>`;
  }
}
